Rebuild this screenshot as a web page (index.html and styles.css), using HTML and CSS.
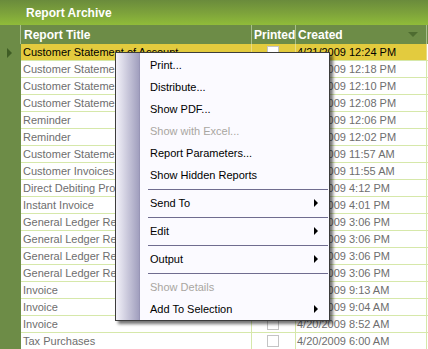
FILE: index.html
```html
<!DOCTYPE html>
<html lang="en">
    <head>
        <meta charset="UTF-8">
        <title>Report Archive</title>
        <link rel="stylesheet" href="styles.css">
    </head>
    <body>
        <div class="archive">
            <div class="titlebar">Report Archive</div>

            <div class="row head">
                <div class="cell gutter"></div>
                <div class="cell title">Report Title</div>
                <div class="cell printed">Printed</div>
                <div class="cell created">Created <span class="sort"></span></div>
                <div class="cell rest"></div>
            </div>

            <div class="rows">
                <div class="row current">
                    <div class="cell gutter"><span class="pointer"></span></div>
                    <div class="cell title">Customer Statement of Account</div>
                    <div class="cell printed"><span class="check"></span></div>
                    <div class="cell created">4/21/2009 12:24 PM</div>
                    <div class="cell rest"></div>
                </div>
                <div class="row">
                    <div class="cell gutter"></div>
                    <div class="cell title">Customer Statement of Account</div>
                    <div class="cell printed"><span class="check"></span></div>
                    <div class="cell created">4/21/2009 12:18 PM</div>
                    <div class="cell rest"></div>
                </div>
                <div class="row">
                    <div class="cell gutter"></div>
                    <div class="cell title">Customer Statement of Account</div>
                    <div class="cell printed"><span class="check"></span></div>
                    <div class="cell created">4/21/2009 12:10 PM</div>
                    <div class="cell rest"></div>
                </div>
                <div class="row">
                    <div class="cell gutter"></div>
                    <div class="cell title">Customer Statement of Account</div>
                    <div class="cell printed"><span class="check"></span></div>
                    <div class="cell created">4/21/2009 12:08 PM</div>
                    <div class="cell rest"></div>
                </div>
                <div class="row">
                    <div class="cell gutter"></div>
                    <div class="cell title">Reminder</div>
                    <div class="cell printed"><span class="check"></span></div>
                    <div class="cell created">4/21/2009 12:06 PM</div>
                    <div class="cell rest"></div>
                </div>
                <div class="row">
                    <div class="cell gutter"></div>
                    <div class="cell title">Reminder</div>
                    <div class="cell printed"><span class="check"></span></div>
                    <div class="cell created">4/21/2009 12:02 PM</div>
                    <div class="cell rest"></div>
                </div>
                <div class="row">
                    <div class="cell gutter"></div>
                    <div class="cell title">Customer Statement of Account</div>
                    <div class="cell printed"><span class="check"></span></div>
                    <div class="cell created">4/21/2009 11:57 AM</div>
                    <div class="cell rest"></div>
                </div>
                <div class="row">
                    <div class="cell gutter"></div>
                    <div class="cell title">Customer Invoices</div>
                    <div class="cell printed"><span class="check"></span></div>
                    <div class="cell created">4/21/2009 11:55 AM</div>
                    <div class="cell rest"></div>
                </div>
                <div class="row">
                    <div class="cell gutter"></div>
                    <div class="cell title">Direct Debiting Proposal</div>
                    <div class="cell printed"><span class="check"></span></div>
                    <div class="cell created">4/20/2009 4:12 PM</div>
                    <div class="cell rest"></div>
                </div>
                <div class="row">
                    <div class="cell gutter"></div>
                    <div class="cell title">Instant Invoice</div>
                    <div class="cell printed"><span class="check"></span></div>
                    <div class="cell created">4/20/2009 4:01 PM</div>
                    <div class="cell rest"></div>
                </div>
                <div class="row">
                    <div class="cell gutter"></div>
                    <div class="cell title">General Ledger Report</div>
                    <div class="cell printed"><span class="check"></span></div>
                    <div class="cell created">4/20/2009 3:06 PM</div>
                    <div class="cell rest"></div>
                </div>
                <div class="row">
                    <div class="cell gutter"></div>
                    <div class="cell title">General Ledger Report</div>
                    <div class="cell printed"><span class="check"></span></div>
                    <div class="cell created">4/20/2009 3:06 PM</div>
                    <div class="cell rest"></div>
                </div>
                <div class="row">
                    <div class="cell gutter"></div>
                    <div class="cell title">General Ledger Report</div>
                    <div class="cell printed"><span class="check"></span></div>
                    <div class="cell created">4/20/2009 3:06 PM</div>
                    <div class="cell rest"></div>
                </div>
                <div class="row">
                    <div class="cell gutter"></div>
                    <div class="cell title">General Ledger Report</div>
                    <div class="cell printed"><span class="check"></span></div>
                    <div class="cell created">4/20/2009 3:06 PM</div>
                    <div class="cell rest"></div>
                </div>
                <div class="row">
                    <div class="cell gutter"></div>
                    <div class="cell title">Invoice</div>
                    <div class="cell printed"><span class="check"></span></div>
                    <div class="cell created">4/20/2009 9:13 AM</div>
                    <div class="cell rest"></div>
                </div>
                <div class="row">
                    <div class="cell gutter"></div>
                    <div class="cell title">Invoice</div>
                    <div class="cell printed"><span class="check"></span></div>
                    <div class="cell created">4/20/2009 9:04 AM</div>
                    <div class="cell rest"></div>
                </div>
                <div class="row">
                    <div class="cell gutter"></div>
                    <div class="cell title">Invoice</div>
                    <div class="cell printed"><span class="check"></span></div>
                    <div class="cell created">4/20/2009 8:52 AM</div>
                    <div class="cell rest"></div>
                </div>
                <div class="row">
                    <div class="cell gutter"></div>
                    <div class="cell title">Tax Purchases</div>
                    <div class="cell printed"><span class="check"></span></div>
                    <div class="cell created">4/20/2009 6:00 AM</div>
                    <div class="cell rest"></div>
                </div>
            </div>

            <!-- context menu over the grid -->
            <ul class="menu">
                <li class="item">Print...</li>
                <li class="item">Distribute...</li>
                <li class="item">Show PDF...</li>
                <li class="item disabled">Show with Excel...</li>
                <li class="item">Report Parameters...</li>
                <li class="item">Show Hidden Reports</li>
                <li class="sep"></li>
                <li class="item sub">Send To</li>
                <li class="sep"></li>
                <li class="item sub">Edit</li>
                <li class="sep"></li>
                <li class="item sub">Output</li>
                <li class="sep"></li>
                <li class="item disabled">Show Details</li>
                <li class="item sub">Add To Selection</li>
            </ul>
        </div>
    </body>
</html>
```

FILE: styles.css
```css
/* Reset default styles */
* {
  margin: 0;
  padding: 0;
  box-sizing: border-box;
}

body {
  font-family: 'Liberation Sans', Arial, sans-serif;
  font-size: 11px;
  background-color: #ffffff;
  width: 428px;
  height: 349px;
  overflow: hidden;
}

.archive {
  position: relative;
  height: 349px;
  overflow: hidden;
  background-color: #ffffff;
}

/* Green window caption */
.titlebar {
  height: 25px;
  padding-left: 26px;
  display: flex;
  align-items: center;
  color: #ffffff;
  font-weight: bold;
  font-size: 12px;
  background: linear-gradient(to bottom, #6a8b3c 0%, #7ea43b 55%, #90bc39 100%);
}

/* Grid rows */
.row {
  display: grid;
  grid-template-columns: 21px 231px 44px 131px 1fr;
  height: 17px;
}

.cell {
  display: flex;
  align-items: center;
  white-space: nowrap;
  overflow: hidden;
  border-right: 1px solid #d6e8aa;
  border-bottom: 1px solid #d6e8aa;
  color: #6e6e6e;
}

.cell.gutter {
  background-color: #6d8c47;
  border: none;
  justify-content: center;
}

.cell.rest {
  border-right: none;
}

.cell.title {
  padding-left: 2px;
}

.cell.printed {
  justify-content: center;
}

.cell.created {
  padding-left: 1px;
}

/* Column headers */
.row.head {
  height: 19px;
  background-color: #6d8c47;
}

.row.head .cell {
  color: #ffffff;
  font-weight: bold;
  font-size: 12px;
  border-bottom: none;
  border-right: 1px solid #a9bf8c;
}

.row.head .cell.gutter {
  border-right: 1px solid #a9bf8c;
  margin: 2px 0 0 0;
  background-color: transparent;
}

.row.head .cell.title {
  border-left: 1px solid #a9bf8c;
  margin-left: -1px;
  padding-left: 3px;
}

.row.head .cell.printed {
  justify-content: flex-start;
  padding-left: 2px;
}

.row.head .cell.created {
  padding-left: 2px;
  position: relative;
}

.row.head .cell.rest {
  border-right: none;
}

.sort {
  position: absolute;
  right: 8px;
  top: 7px;
  width: 0;
  height: 0;
  border-left: 5px solid transparent;
  border-right: 5px solid transparent;
  border-top: 5px solid #4e6c30;
}

/* Selected row */
.row.current .cell {
  background-color: #e3cb3e;
  color: #000000;
  border-right-color: #eadb83;
  border-bottom-color: #d6e8aa;
}

.row.current .cell.gutter {
  background-color: #6d8c47;
}

.row.current .cell.rest {
  background-color: #ffffff;
}

.pointer {
  width: 0;
  height: 0;
  border-top: 5px solid transparent;
  border-bottom: 5px solid transparent;
  border-left: 5px solid #3f5d25;
  margin-left: -2px;
}

.check {
  width: 12px;
  height: 12px;
  border: 1px solid #c4c4c4;
  background-color: #ffffff;
  margin-left: -1px;
}

/* Context menu */
.menu {
  position: absolute;
  left: 115px;
  top: 52px;
  width: 215px;
  list-style: none;
  padding: 1px 1px 0 1px;
  border: 1px solid #3c3c3c;
  background: linear-gradient(to right, #f3f2f9 0, #a19fbe 23px, #8f8cad 24px, #fbfaff 24px);
  box-shadow: 3px 3px 3px rgba(0, 0, 0, 0.55);
  color: #000000;
}

.menu .item {
  height: 22px;
  padding-left: 33px;
  display: flex;
  align-items: center;
  position: relative;
}

.menu .item.disabled {
  color: #a9a6a1;
}

.menu .item.sub::after {
  content: '';
  position: absolute;
  right: 10px;
  top: 7px;
  width: 0;
  height: 0;
  border-top: 4px solid transparent;
  border-bottom: 4px solid transparent;
  border-left: 4px solid #000000;
}

.menu .sep {
  height: 1px;
  margin: 3px 0 2px 31px;
  background-color: #6f6c8f;
}
```
